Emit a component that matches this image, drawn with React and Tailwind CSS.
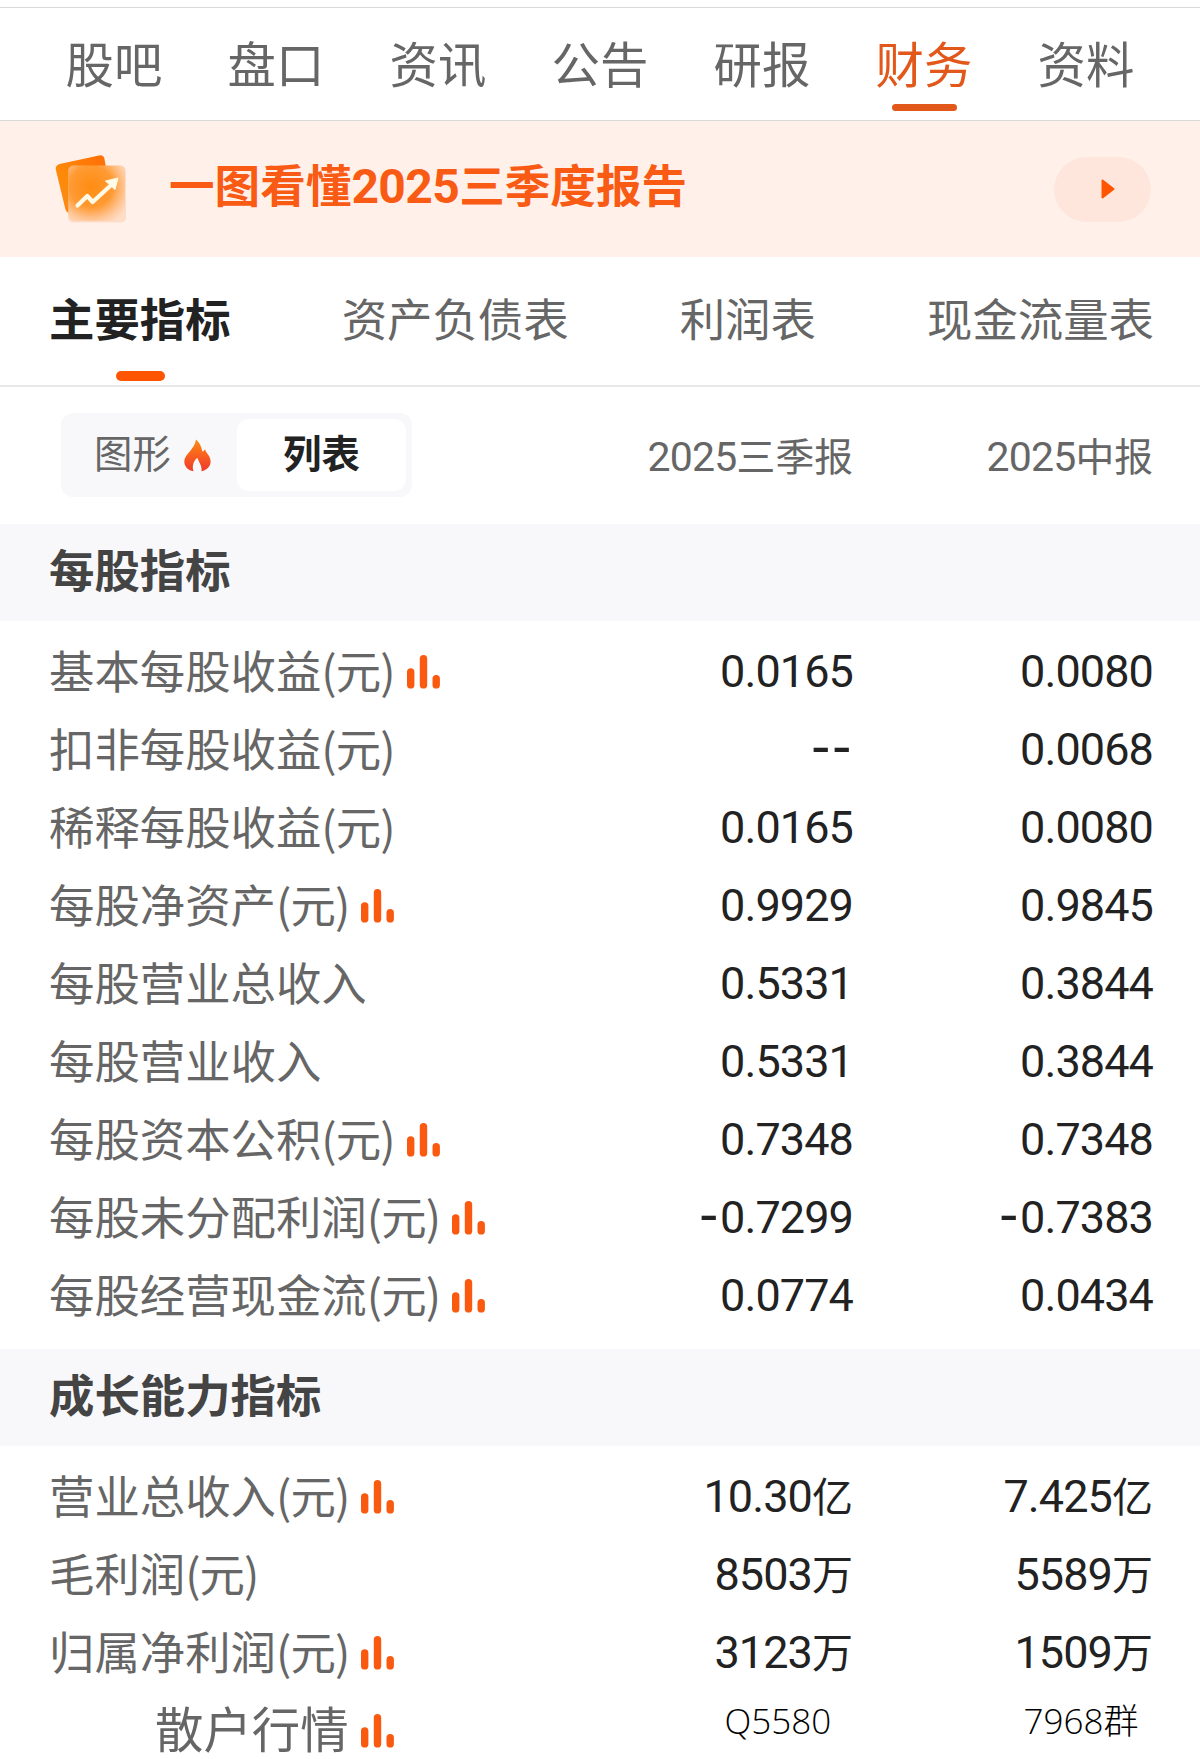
const navTabs = ['股吧', '盘口', '资讯', '公告', '研报', '财务', '资料'];

const reportTabs = ['主要指标', '资产负债表', '利润表', '现金流量表'];

const perShare = [
    { name: '基本每股收益', unit: '(元)', chart: true, values: ['0.0165', '0.0080'] },
    { name: '扣非每股收益', unit: '(元)', values: ['--', '0.0068'] },
    { name: '稀释每股收益', unit: '(元)', values: ['0.0165', '0.0080'] },
    { name: '每股净资产', unit: '(元)', chart: true, values: ['0.9929', '0.9845'] },
    { name: '每股营业总收入', values: ['0.5331', '0.3844'] },
    { name: '每股营业收入', values: ['0.5331', '0.3844'] },
    { name: '每股资本公积', unit: '(元)', chart: true, values: ['0.7348', '0.7348'] },
    { name: '每股未分配利润', unit: '(元)', chart: true, values: ['-0.7299', '-0.7383'] },
    { name: '每股经营现金流', unit: '(元)', chart: true, values: ['0.0774', '0.0434'] },
];

const growth = [
    { name: '营业总收入', unit: '(元)', chart: true, values: ['10.30亿', '7.425亿'] },
    { name: '毛利润', unit: '(元)', values: ['8503万', '5589万'] },
    { name: '归属净利润', unit: '(元)', chart: true, values: ['3123万', '1509万'] },
];

function ChartIcon() {
    return (
        <svg width="33" height="34" viewBox="0 0 33 34" fill="#fa5a0f" className="shrink-0">
            <rect x="0" y="13.2" width="7.4" height="20.4" rx="3.7" />
            <rect x="12.8" y="0" width="7.4" height="33.6" rx="3.7" />
            <rect x="25.5" y="20" width="7.4" height="13.6" rx="3.7" />
        </svg>
    );
}

function ReportIcon() {
    return (
        <svg width="80" height="80" viewBox="0 0 80 80" className="shrink-0">
            <defs>
                <linearGradient id="back" x1="0" y1="1" x2="1" y2="0">
                    <stop offset="0" stopColor="#f98a1c" />
                    <stop offset="0.4" stopColor="#fd8a08" />
                    <stop offset="1" stopColor="#ff6a08" />
                </linearGradient>
                <radialGradient id="front" cx="0.4" cy="0.38" r="0.75">
                    <stop offset="0" stopColor="#ff8c12" />
                    <stop offset="0.5" stopColor="#ff9a33" />
                    <stop offset="0.8" stopColor="#ffc798" />
                    <stop offset="1" stopColor="#ffddc6" />
                </radialGradient>
            </defs>
            <path
                d="M9.500 15 L49 6.500 Q53.500 5.500 54.500 10 L62 54 L22 64 Q16.500 65 15.300 60 L5.800 20.500 Q5 16.500 9.500 15Z"
                fill="url(#back)"
            />
            <rect x="18" y="17" width="58" height="56.500" rx="5" fill="#fbc8a8" opacity="0.5" />
            <rect x="18.500" y="16.500" width="56.500" height="55.500" rx="5" fill="url(#front)" />
            <path d="M27.500 56.500 L37.300 47 L42.700 53 L61.700 35.500" fill="none" stroke="#fffbe6" strokeWidth="4.200" strokeLinejoin="round" strokeLinecap="round" />
            <path d="M55.500 32 L68 29 L65 40.500Z" fill="#fffbe6" stroke="#fffbe6" strokeLinejoin="round" />
        </svg>
    );
}

function FlameIcon() {
    return (
        <svg width="27" height="33" viewBox="0 0 27 33" className="shrink-0">
            <defs>
                <linearGradient id="flame" x1="0" y1="0" x2="0" y2="1">
                    <stop offset="0" stopColor="#fb8c10" />
                    <stop offset="0.5" stopColor="#f9601f" />
                    <stop offset="1" stopColor="#ee3a2c" />
                </linearGradient>
            </defs>
            <path
                d="M12 0.500 C15.500 3.500 17.500 7.500 18.300 12.500 C19.500 12.300 20.500 11.300 21 10 C21.800 14.500 26.600 16.500 26.600 22.500 C26.600 27 23.500 31 17.500 32.300 C18.300 27.500 15.500 24.500 13.300 18.800 C9.500 22 7.800 27 9.500 32.300 C3.500 31 0.300 27.300 0.300 22.500 C0.300 15 10.500 11 12 0.500Z"
                fill="url(#flame)"
            />
        </svg>
    );
}

function Value({ text, className }) {
    const [, dashes, digits, suffix] = text.match(/^(-*)([\d.]*)(.*)$/);

    return (
        <span
            className={`block pt-px text-right font-[Roboto,'Noto_Sans_CJK_SC',sans-serif] text-[45px] leading-[78px] tracking-[-0.9px] whitespace-nowrap text-[#222] ${className}`}
        >
            {dashes && <span className="font-['DejaVu_Sans',sans-serif] text-[54px] leading-none tracking-[1.5px]">{dashes}</span>}
            {digits}
            {suffix && <span className="text-[41px] leading-none tracking-normal">{suffix}</span>}
        </span>
    );
}

function Row({ name, unit, chart, values }) {
    return (
        <div className="flex h-[78px] items-center pl-[49px]">
            <div className="flex w-[501px] items-center">
                <span className="-mt-[5px] text-[45.4px] leading-[78px] whitespace-nowrap text-[#666]">
                    {name}
                    {unit && <span className="tracking-[-0.9px]">{unit}</span>}
                </span>
                {chart && (
                    <span className="ml-[12px] pt-0.5">
                        <ChartIcon />
                    </span>
                )}
            </div>
            <Value text={values[0]} className="w-[303px]" />
            <Value text={values[1]} className="w-[300px]" />
        </div>
    );
}

function SectionTitle({ children }) {
    return (
        <h2 className="flex h-[97px] items-center bg-[#f8f8fa] pb-[9px] pl-[49px] text-[45.4px] font-bold text-[#444]">
            {children}
        </h2>
    );
}

function PeriodLabel({ year, period, className }) {
    return (
        <span className={`flex items-baseline justify-end pt-0.5 text-[38.8px] text-[#666] ${className}`}>
            <span className="font-[Roboto,sans-serif] text-[41px] tracking-[-0.8px]">{year}</span>
            {period}
        </span>
    );
}

export default function App() {
    return (
        <div className="h-[1759px] w-[1200px] overflow-hidden bg-white font-['Noto_Sans_CJK_SC',sans-serif]">
            <nav className="mt-[7px] flex h-[114px] border-y border-[#d9d9d9] px-[33px]">
                {navTabs.map((tab) => (
                    <div
                        key={tab}
                        className={`flex flex-1 flex-col items-center pt-[18px] text-[48.4px] leading-[72px] ${tab === '财务' ? 'text-[#e2571a]' : 'text-[#666]'}`}
                    >
                        {tab}
                        {tab === '财务' && <span className="mt-[6px] h-[7px] w-[65px] rounded-full bg-[#e2571a]" />}
                    </div>
                ))}
            </nav>

            <div className="flex h-[136px] items-center bg-[#fff1ea] pr-[49px] pl-[50px]">
                <ReportIcon />
                <div className="ml-[39px] flex flex-1 items-baseline pb-[7px] text-[45.6px] font-bold text-[#f95a14]">
                    一图看懂
                    <span className="font-[Roboto,sans-serif] text-[48px] tracking-[-0.6px]">2025</span>
                    三季度报告
                </div>
                <button className="flex h-[65px] w-[97px] items-center justify-center rounded-full bg-[#ffe6dc] pl-2.5">
                    <svg width="14" height="20" viewBox="0 0 14 20">
                        <path d="M1.500 1.500 L12.500 10 L1.500 18.500Z" fill="#ff5500" stroke="#ff5500" strokeWidth="2" strokeLinejoin="round" />
                    </svg>
                </button>
            </div>

            <div className="flex h-[130px] justify-between border-b-2 border-[#e8e8e8] pt-[25px] pr-[46px] pl-[49px]">
                {reportTabs.map((tab, i) => (
                    <div
                        key={tab}
                        className={`flex flex-col items-center text-[45.4px] leading-[70px] ${i === 0 ? 'font-bold text-[#222]' : 'text-[#666]'}`}
                    >
                        {tab}
                        {i === 0 && <span className="mt-[19px] ml-0.5 h-[10px] w-[49px] rounded-full bg-[#ff5500]" />}
                    </div>
                ))}
            </div>

            <div className="flex h-[137px] items-center pl-[61px]">
                <div className="mb-[2px] flex h-[84px] w-[351px] items-center rounded-xl bg-[#f8f8fa] pr-1.5">
                    <div className="flex flex-1 items-center pl-[33px]">
                        <span className="-mt-[6px] text-[38.4px] text-[#666]">图形</span>
                        <span className="ml-[13px] pt-0.5">
                            <FlameIcon />
                        </span>
                    </div>
                    <div className="flex h-[72px] w-[169px] items-center justify-center rounded-xl bg-white pb-[6px] text-[38.4px] font-bold text-[#222]">
                        列表
                    </div>
                </div>
                <PeriodLabel year="2025" period="三季报" className="w-[441px]" />
                <PeriodLabel year="2025" period="中报" className="w-[300px]" />
            </div>

            <SectionTitle>每股指标</SectionTitle>
            <div className="pt-[11px] pb-[15px]">
                {perShare.map((row) => (
                    <Row key={row.name} {...row} />
                ))}
            </div>

            <SectionTitle>成长能力指标</SectionTitle>
            <div className="pt-[11px]">
                {growth.map((row) => (
                    <Row key={row.name} {...row} />
                ))}
                <div className="flex h-[67px] items-center pl-[155px]">
                    <span className="pt-1 text-[48.4px] leading-[60px] text-[#666]">散户行情</span>
                    <span className="ml-[12px] pt-[13px]">
                        <ChartIcon />
                    </span>
                    <div className="flex pb-[7px] font-['Open_Sans','Noto_Sans_CJK_SC',sans-serif] text-[35px] leading-[60px] font-light text-black">
                        <span className="ml-[331px] w-[299px]">Q5580</span>
                        <span>7968群</span>
                    </div>
                </div>
            </div>
        </div>
    );
}
